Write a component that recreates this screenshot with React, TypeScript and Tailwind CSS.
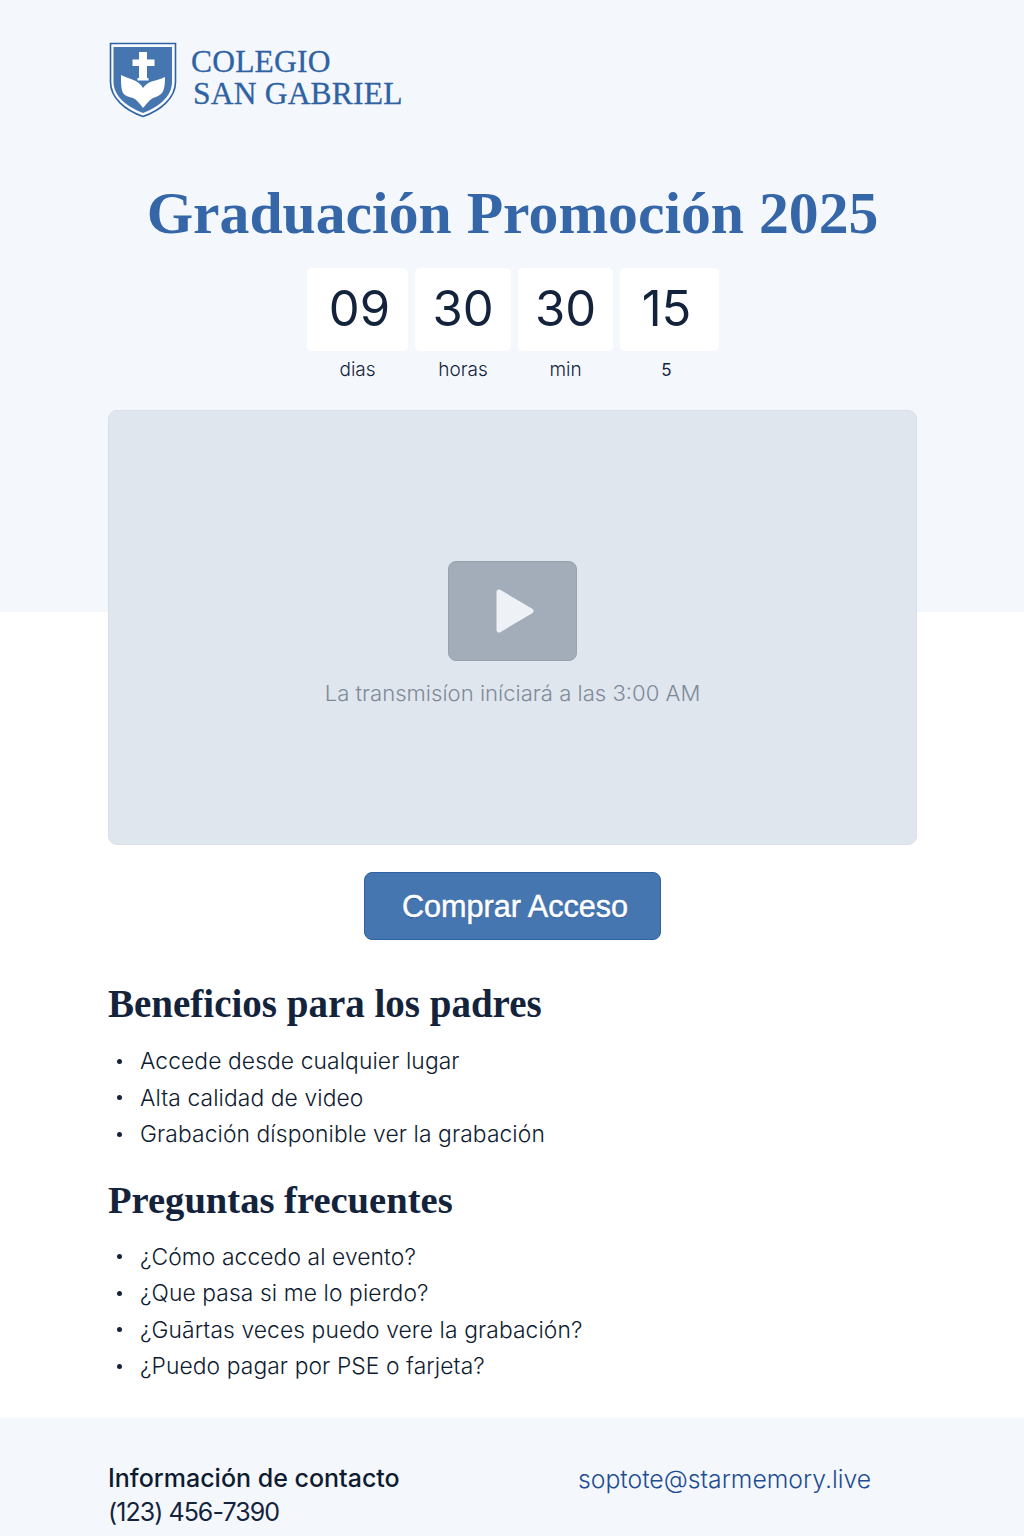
const serif = "font-['Liberation_Serif',serif]";

function Crest() {
  return (
    <svg width="68" height="76" viewBox="0 0 68 76" className="shrink-0">
      <path d="M1.500 1.500H66.500V40C66.500 56 52 68 34 74.500C16 68 1.500 56 1.500 40Z" fill="#f8fafd" stroke="#2f62a3" strokeWidth="1.600" />
      <path d="M4.500 5H63V40C63 54 50 65 34 71C18 65 4.500 54 4.500 40Z" fill="#4676b0" />
      <path d="M30 10H38V17.500H45.500V24H38V36H39.500V38.500H28.500V36H30V24H23.500V17.500H30Z" fill="#fff" />
      <path d="M12 33C19 37 29 37 34 46C39 38 49 39 56 35C56 44 55 48 53 51C50 54 47 55 44 56C40 58 37 63 34 66C31 62 28 58 24 56C20 55 16 54 14 51C12 47 12 40 12 33Z" fill="#fff" />
    </svg>
  );
}

function Count({ value, label, width, small, cls }: { value: string; label: string; width: string; small?: boolean; cls?: string }) {
  return (
    <div className={`${width} flex flex-col items-center`}>
      <div className={`w-full h-[83px] pb-[2px] bg-white rounded-[5px] flex items-center justify-center text-[49px] text-[#14233c] ${cls ?? ""}`}>{value}</div>
      <div className={`mt-[6px] h-[26px] leading-[26px] text-[#14233c] ${small ? "text-[17px] pr-[6px] font-normal" : "text-[19px] font-light"}`}>{label}</div>
    </div>
  );
}

function Bullets({ items }: { items: string[] }) {
  return (
    <ul className="mt-[17px] flex flex-col text-[22.800px] leading-[36.500px] font-light tracking-[0.1px] text-[#0f1b30]">
      {items.map((t) => (
        <li key={t} className="flex items-center">
          <span className="w-[5px] h-[5px] rounded-full bg-[#14233c] ml-[9px] mr-[18px]" />
          {t}
        </li>
      ))}
    </ul>
  );
}

export default function App() {
  return (
    <div className="w-[1024px] h-[1536px] overflow-hidden flex flex-col font-['Inter',sans-serif] bg-[linear-gradient(#f4f8fd_612px,#ffffff_612px)]">
      <div className="flex-1 pl-[108px] pr-[107px]">
        <header className="pt-[42px] flex items-start gap-[14px] h-[119px] pl-[1px]">
          <Crest />
          <div className={`${serif} mt-[4px] text-[#2f62a3] text-[31.500px] leading-[32px] tracking-[0.2px] [-webkit-text-stroke:0.3px_#2f62a3]`}>
            <div>COLEGIO</div>
            <div className="ml-[2px]">SAN GABRIEL</div>
          </div>
        </header>
        <h1 className={`${serif} mt-[56px] text-center font-bold text-[#3566a8] text-[59.700px] leading-[76px]`}>Graduación Promoción 2025</h1>
        <div className="mt-[17px] ml-[1px] flex justify-center gap-[7px]">
          <Count value="09" label="dias" width="w-[101px]" cls="pl-[4px]" />
          <Count value="30" label="horas" width="w-[96px]" />
          <Count value="30" label="min" width="w-[95px]" />
          <Count value="15" label="5" width="w-[99px]" small cls="pr-[6px]" />
        </div>
        <div className="mt-[27px] h-[435px] rounded-[9px] bg-[#e0e6ee] border border-[#d9e0e9] flex flex-col items-center pt-[150px]">
          <div className="w-[129px] h-[100px] rounded-[8px] bg-[#a3adb9] border border-[#98a3b0] flex items-center justify-center pl-[4px]">
            <svg width="40" height="46" viewBox="0 0 40 46">
              <path d="M4 4 L36 23 L4 42Z" fill="#eef1f5" stroke="#eef1f5" strokeWidth="5" strokeLinejoin="round" />
            </svg>
          </div>
          <p className="mt-[18px] text-[22.100px] leading-[28px] font-light text-[#7f8a99]">La transmisíon iníciará a las 3:00 AM</p>
        </div>
        <div className="mt-[27px] flex justify-center">
          <button className="w-[297px] h-[68px] pt-[2px] pl-[5px] rounded-[8px] bg-[#4676b0] border border-[#2f62a3] text-white text-[30.600px] font-['Liberation_Sans',sans-serif] [-webkit-text-stroke:0.5px_#ffffff] [text-shadow:0_1px_1px_#24518c]">Comprar Acceso</button>
        </div>
        <h2 className={`${serif} mt-[42px] font-bold text-[#14233c] text-[39px] leading-[44px]`}>Beneficios para los padres</h2>
        <Bullets items={["Accede desde cualquier lugar", "Alta calidad de video", "Grabación dísponible ver la grabación"]} />
        <h2 className={`${serif} mt-[25px] font-bold text-[#14233c] text-[38.600px] leading-[44px]`}>Preguntas frecuentes</h2>
        <Bullets items={["¿Cómo accedo al evento?", "¿Que pasa si me lo pierdo?", "¿Guārtas veces puedo vere la grabación?", "¿Puedo pagar por PSE o farjeta?"]} />
      </div>
      <footer className="h-[118px] bg-[#f4f8fd] px-[108px] pt-[43px] flex items-start">
        <div className="w-[470px]">
          <div className="text-[25px] leading-[34px] font-medium text-[#0f1b30]">Información de contacto</div>
          <div className="text-[25px] leading-[34px] tracking-[-0.950px] text-[#14233c]">(123) 456-7390</div>
        </div>
        <a className="text-[24.750px] leading-[36px] font-light text-[#1f4c92]">soptote@starmemory.live</a>
      </footer>
    </div>
  );
}
